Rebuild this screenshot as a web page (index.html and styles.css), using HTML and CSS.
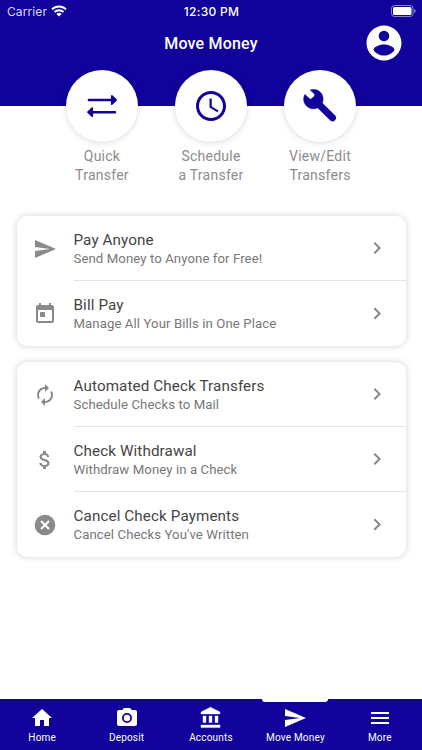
FILE: index.html
```html
<!DOCTYPE html>
<html lang="en">

<head>
    <meta charset="UTF-8">
    <meta name="viewport" content="width=device-width, initial-scale=1.0">
    <title>Move Money</title>
    <link rel="stylesheet" href="styles.css">
</head>

<body>
    <header>
        <div class="status-bar">
            <div class="carrier">
                <span>Carrier</span>
                <svg width="16" height="12" viewBox="0 0 16 12" fill="none" stroke="#fff" stroke-width="2">
                    <path d="M1 4.400a10 10 0 0 1 14 0M3.500 7a6.400 6.400 0 0 1 9 0" />
                    <path d="M8 11.600 5.400 9a3.700 3.700 0 0 1 5.200 0z" fill="#fff" stroke="none" />
                </svg>
            </div>
            <div class="clock">12:30 PM</div>
            <div class="battery">
                <svg width="25" height="12" viewBox="0 0 25 12">
                    <rect x=".5" y=".5" width="21.500" height="11" rx="3" fill="none" stroke="#fff" stroke-opacity=".5" />
                    <rect x="2" y="2" width="18.500" height="8" rx="1.600" fill="#fff" />
                    <path d="M23.300 4v4c.9-.4 1.300-1.100 1.300-2s-.4-1.600-1.300-2z" fill="#fff" fill-opacity=".6" />
                </svg>
            </div>
        </div>
        <div class="title-bar">
            <h1>Move Money</h1>
            <a class="profile" href="#" aria-label="Profile">
                <svg width="42" height="42" viewBox="0 0 24 24" fill="#fff"><path d="M12 2C6.480 2 2 6.480 2 12s4.480 10 10 10 10-4.480 10-10S17.520 2 12 2zm0 3c1.660 0 3 1.340 3 3s-1.340 3-3 3-3-1.340-3-3 1.340-3 3-3zm0 14.200c-2.500 0-4.710-1.280-6-3.220.030-1.990 4-3.080 6-3.080 1.990 0 5.970 1.090 6 3.080-1.290 1.940-3.500 3.220-6 3.220z" /></svg>
            </a>
        </div>
    </header>

    <nav class="shortcuts">
        <a href="#">
            <span class="circle">
                <svg width="32" height="26" viewBox="0 0 32 26" fill="#10029b" stroke="#10029b" stroke-linejoin="round" stroke-linecap="round">
                    <path d="M3 7h24M5 19.200h24" stroke-width="2.600" />
                    <path d="M25.800 3v8l4.200-4zM6.200 15.200v8l-4.200-4z" stroke-width="1.800" />
                </svg>
            </span>
            Quick<br>Transfer
        </a>
        <a href="#">
            <span class="circle">
                <svg width="36" height="36" viewBox="0 0 24 24" fill="#10029b"><path d="M11.990 2C6.470 2 2 6.480 2 12s4.470 10 9.990 10C17.520 22 22 17.520 22 12S17.520 2 11.990 2zM12 20c-4.420 0-8-3.580-8-8s3.580-8 8-8 8 3.580 8 8-3.580 8-8 8z" /><path d="M12.500 7H11v6l5.250 3.150.75-1.230-4.500-2.670z" /></svg>
            </span>
            Schedule<br>a Transfer
        </a>
        <a href="#">
            <span class="circle">
                <svg width="34" height="34" viewBox="0 0 34 34" fill="none" stroke="#10029b">
                    <path d="M14 13.500 29.500 28.800" stroke-width="7" stroke-linecap="round" />
                    <path d="M7.300.9 11.500 5q.8 1-.2 2.200L8.800 9.600q-1.200 1-2.300.1L1.900 5.400A9.700 9.700 0 1 0 7.300.9z" fill="#10029b" stroke-width=".6" stroke-linejoin="round" />
                </svg>
            </span>
            View/Edit<br>Transfers
        </a>
    </nav>

    <main>
        <section class="card">
            <a class="row" href="#">
                <svg class="icon" viewBox="0 0 24 24"><path d="M2.010 21L23 12 2.010 3 2 10l15 2-15 2z" /></svg>
                <div class="text">
                    <h2>Pay Anyone</h2>
                    <p>Send Money to Anyone for Free!</p>
                </div>
                <svg class="arrow" viewBox="0 0 24 24"><path d="M10 6L8.590 7.410 13.170 12l-4.580 4.590L10 18l6-6z" /></svg>
            </a>
            <a class="row" href="#">
                <svg class="icon" viewBox="0 0 24 24"><path d="M19 3h-1V1h-2v2H8V1H6v2H5c-1.110 0-1.990.9-1.990 2L3 19c0 1.100.89 2 2 2h14c1.100 0 2-.9 2-2V5c0-1.100-.9-2-2-2zm0 16H5V8h14v11z" /><rect x="7" y="10" width="5" height="5" rx=".6" /></svg>
                <div class="text">
                    <h2>Bill Pay</h2>
                    <p>Manage All Your Bills in One Place</p>
                </div>
                <svg class="arrow" viewBox="0 0 24 24"><path d="M10 6L8.590 7.410 13.170 12l-4.580 4.590L10 18l6-6z" /></svg>
            </a>
        </section>

        <section class="card">
            <a class="row" href="#">
                <svg class="icon" viewBox="0 0 24 24"><path d="M12 6v3l4-4-4-4v3c-4.420 0-8 3.580-8 8 0 1.570.46 3.030 1.240 4.260L6.700 14.800c-.45-.83-.7-1.790-.7-2.800 0-3.310 2.690-6 6-6zm6.760 1.740L17.300 9.200c.44.84.7 1.790.7 2.800 0 3.310-2.690 6-6 6v-3l-4 4 4 4v-3c4.420 0 8-3.580 8-8 0-1.570-.46-3.030-1.240-4.260z" /></svg>
                <div class="text">
                    <h2>Automated Check Transfers</h2>
                    <p>Schedule Checks to Mail</p>
                </div>
                <svg class="arrow" viewBox="0 0 24 24"><path d="M10 6L8.590 7.410 13.170 12l-4.580 4.590L10 18l6-6z" /></svg>
            </a>
            <a class="row" href="#">
                <svg class="icon" viewBox="0 0 24 24"><path d="M11.800 10.900c-2.270-.59-3-1.200-3-2.150 0-1.090 1.010-1.850 2.700-1.850 1.780 0 2.440.85 2.500 2.100h2.210c-.07-1.720-1.120-3.300-3.210-3.810V3h-3v2.160c-1.940.42-3.500 1.680-3.500 3.610 0 2.310 1.910 3.460 4.700 4.130 2.500.6 3 1.480 3 2.410 0 .69-.49 1.790-2.700 1.790-2.060 0-2.870-.92-2.980-2.100h-2.200c.12 2.190 1.760 3.420 3.680 3.830V21h3v-2.150c1.950-.37 3.500-1.500 3.500-3.550 0-2.840-2.430-3.810-4.700-4.400z" /></svg>
                <div class="text">
                    <h2>Check Withdrawal</h2>
                    <p>Withdraw Money in a Check</p>
                </div>
                <svg class="arrow" viewBox="0 0 24 24"><path d="M10 6L8.590 7.410 13.170 12l-4.580 4.590L10 18l6-6z" /></svg>
            </a>
            <a class="row" href="#">
                <svg class="icon" viewBox="0 0 24 24"><circle cx="12" cy="12" r="10.300" /><path d="M8 8l8 8M16 8l-8 8" stroke="#fff" stroke-width="2.100" /></svg>
                <div class="text">
                    <h2>Cancel Check Payments</h2>
                    <p>Cancel Checks You've Written</p>
                </div>
                <svg class="arrow" viewBox="0 0 24 24"><path d="M10 6L8.590 7.410 13.170 12l-4.580 4.590L10 18l6-6z" /></svg>
            </a>
        </section>
    </main>

    <footer>
        <a href="#">
            <svg viewBox="0 0 24 24"><path d="M10 20v-6h4v6h5v-8h3L12 3 2 12h3v8z" /></svg>
            Home
        </a>
        <a href="#">
            <svg viewBox="0 0 24 24"><path fill-rule="evenodd" d="M9 2L7.170 4H4c-1.100 0-2 .9-2 2v12c0 1.100.9 2 2 2h16c1.100 0 2-.9 2-2V6c0-1.100-.9-2-2-2h-3.170L15 2zM12 7a5 5 0 1 1 0 10 5 5 0 0 1 0-10zm0 1.800a3.200 3.200 0 1 0 0 6.400 3.200 3.200 0 0 0 0-6.400z" /></svg>
            Deposit
        </a>
        <a href="#">
            <svg viewBox="0 0 24 24" stroke="#fff" stroke-width=".4" stroke-linejoin="round"><path d="M11.500 1.200L2 6v2h19V6zM4 10h3v6.500H4zM10 10h3v6.500h-3zM16 10h3v6.500h-3zM2 19h19v2.600H2z" /></svg>
            Accounts
        </a>
        <a class="active" href="#">
            <svg viewBox="0 0 24 24"><path d="M2.010 21L23 12 2.010 3 2 10l15 2-15 2z" /></svg>
            Move Money
        </a>
        <a href="#">
            <svg viewBox="0 0 24 24"><path d="M3 18h18v-2H3v2zm0-5h18v-2H3v2zm0-7v2h18V6H3z" /></svg>
            More
        </a>
    </footer>
</body>

</html>
```
FILE: styles.css
```css
* {
    box-sizing: border-box;
}

body {
    font-family: Roboto, sans-serif;
    margin: 0;
    height: 100vh;
    display: flex;
    flex-direction: column;
    background-color: #fff;
}

a {
    color: inherit;
    text-decoration: none;
}

svg {
    display: block;
}

h1,
h2,
p {
    margin: 0;
    font-weight: normal;
}

header {
    height: 106px;
    background-color: #10029b;
    color: white;
}

.status-bar {
    display: grid;
    grid-template-columns: 1fr auto 1fr;
    align-items: center;
    height: 22px;
    padding: 0 6px 0 7px;
    font-family: Inter, sans-serif;
    font-size: 12px;
}

.carrier {
    display: flex;
    align-items: center;
    gap: 4px;
    color: #dcdaf2;
    letter-spacing: 0.1px;
}

.clock {
    font-weight: 500;
    letter-spacing: 0.3px;
}

.battery {
    justify-self: end;
}

.title-bar {
    display: grid;
    grid-template-columns: 1fr auto 1fr;
    align-items: center;
    height: 42px;
    padding-right: 17px;
    padding-left: 17px;
}

.title-bar h1 {
    grid-column: 2;
    font-size: 16px;
    font-weight: 500;
    letter-spacing: 0.2px;
}

.profile {
    justify-self: end;
}

.shortcuts {
    display: flex;
    justify-content: center;
    margin-top: -36px;
}

.shortcuts a {
    display: flex;
    flex-direction: column;
    align-items: center;
    width: 109px;
    color: #8c8c8c;
    font-size: 14px;
    line-height: 19px;
    letter-spacing: 0.25px;
    text-align: center;
}

.circle {
    display: flex;
    align-items: center;
    justify-content: center;
    width: 72px;
    height: 72px;
    margin-bottom: 5px;
    border-radius: 50%;
    background-color: white;
    box-shadow: 0 1px 6px rgba(0, 0, 0, 0.15);
}

main {
    flex: 1;
    padding: 31px 16.5px 0;
}

.card {
    margin-bottom: 16px;
    border-radius: 10px;
    background-color: white;
    box-shadow: 0 0 7px rgba(0, 0, 0, 0.18);
}

.row {
    display: flex;
    align-items: center;
    height: 65px;
    padding-left: 16px;
}

.icon {
    width: 24px;
    height: 24px;
    margin-right: 17px;
    fill: #8a8a8a;
}

.text {
    flex: 1;
    height: 65px;
    padding-top: 14px;
}

.row:not(:last-child) .text,
.row:not(:last-child) .arrow {
    border-bottom: 1px solid #e4e4e4;
}

.text h2 {
    color: #444;
    font-size: 15.2px;
    line-height: 20px;
    letter-spacing: 0.12px;
}

.text p {
    color: #777;
    font-size: 13.2px;
    line-height: 18px;
    letter-spacing: 0.08px;
}

.arrow {
    width: 53px;
    height: 65px;
    padding: 20px 17px 20px 12px;
    fill: #888;
}

footer {
    display: flex;
    height: 51px;
    background-color: #10029b;
    color: white;
}

footer a {
    position: relative;
    display: flex;
    flex: 1;
    flex-direction: column;
    align-items: center;
    gap: 1px;
    padding-top: 7px;
    font-size: 10px;
    line-height: 13px;
    letter-spacing: 0.2px;
    white-space: nowrap;
}

footer svg {
    width: 24px;
    height: 24px;
    fill: white;
}

footer .active::before {
    content: "";
    position: absolute;
    top: 0;
    width: 66px;
    height: 3px;
    border-radius: 0 0 3px 3px;
    background-color: white;
}
```
